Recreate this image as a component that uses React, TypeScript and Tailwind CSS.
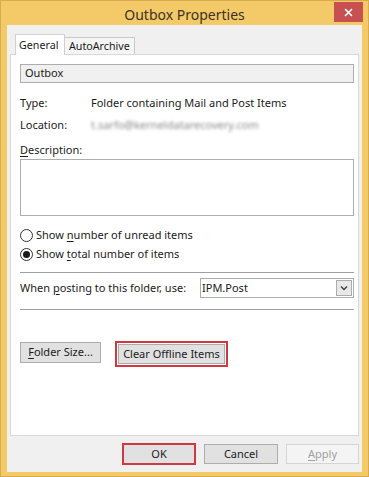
function U({ children }: { children: string }) {
  return <span className="underline underline-offset-2">{children}</span>;
}

function Radio({ checked }: { checked?: boolean }) {
  return (
    <div className="w-[13px] h-[13px] rounded-full border border-[#333] bg-white flex items-center justify-center">
      {checked && <div className="w-[7px] h-[7px] rounded-full bg-[#1a1a1a]" />}
    </div>
  );
}

export default function App() {
  return (
    <div
      className="w-[369px] h-[477px] bg-[#f4ca69] border border-[#d8ac4e] flex flex-col text-[11px] text-[#1b1b1b] whitespace-nowrap"
      style={{ fontFamily: '"Noto Sans", "Open Sans", sans-serif' }}
    >
      {/* Title bar */}
      <div className="relative h-[24px] shrink-0 flex items-center justify-center">
        <span className="text-[14px] text-[#3a3326] mt-[3px]">Outbox Properties</span>
        <div className="absolute right-[5px] top-[1px] w-[29px] h-[20px] bg-[#c75050] flex items-center justify-center">
          <svg width="9" height="9" viewBox="0 0 9 9">
            <path d="M1 1 L8 8 M8 1 L1 8" stroke="white" strokeWidth="1.6" />
          </svg>
        </div>
      </div>

      {/* Client */}
      <div className="flex-1 ml-[6px] mr-[6px] mb-[4px] bg-[#f0f0f0] flex flex-col">
        {/* Tabs */}
        <div className="flex items-end h-[29px] pl-[8px] pt-[8px] text-[10.7px]">
          <div className="h-[21px] w-[50px] bg-white border border-[#d0d0d0] border-b-0 pl-[3px] flex items-center relative top-[1px] z-10">
            General
          </div>
          <div className="h-[17px] w-[70px] bg-[#f5f5f5] border border-[#c8c8c8] border-l-0 border-b-0 pl-[4px] flex items-center text-[#1b1b1b]">
            AutoArchive
          </div>
        </div>

        {/* Panel */}
        <div className="ml-[3px] mr-[3px] h-[382px] bg-white border border-[#d9d9d9] pl-[9px] pr-[4px] flex flex-col">
          <div className="mt-[9px] h-[19px] bg-[#f0f0f0] border border-[#adadad] pl-[4px] flex items-center">
            Outbox
          </div>
          <div className="mt-[10px] h-[20px] flex items-center">
            <span className="w-[71px]">Type:</span>
            <span>Folder containing Mail and Post Items</span>
          </div>
          <div className="mt-[2px] h-[20px] flex items-center">
            <span className="w-[71px]">Location:</span>
            <span className="text-[#8a8a8a] blur-[1.4px]">t.sarfo@kerneldatarecovery.com</span>
          </div>
          <div className="mt-[7px] h-[16px] flex items-center">
            <span>
              <U>D</U>escription:
            </span>
          </div>
          <div className="mt-[1px] h-[57px] bg-white border border-[#abadb3]" />
          <div className="mt-[10px] h-[19px] flex items-center gap-[3px]">
            <Radio />
            <span>
              Show <U>n</U>umber of unread items
            </span>
          </div>
          <div className="h-[19px] flex items-center gap-[3px]">
            <Radio checked />
            <span>
              Show <U>t</U>otal number of items
            </span>
          </div>
          <div className="mt-[8px] h-px bg-[#a0a0a0]" />
          <div className="mt-[5px] h-[20px] flex items-center">
            <span className="w-[180px]">
              When <U>p</U>osting to this folder, use:
            </span>
            <div className="flex-1 h-[20px] bg-white border border-[#abadb3] pl-[1px] flex items-center justify-between pr-[1px]">
              <span>IPM.Post</span>
              <div className="w-[16px] h-[16px] bg-[#e8e8e8] border border-[#acacac] flex items-center justify-center">
                <svg width="8" height="6" viewBox="0 0 8 6">
                  <path d="M1 1.5 L4 4.5 L7 1.5" stroke="#404040" strokeWidth="1.5" fill="none" />
                </svg>
              </div>
            </div>
          </div>
          <div className="mt-[11px] h-px bg-[#a0a0a0]" />
          <div className="mt-[31px] flex items-start">
            <div className="mt-[1px] w-[81px] h-[21px] bg-[#e1e1e1] border border-[#adadad] flex items-center justify-center">
              <span>
                <U>F</U>older Size...
              </span>
            </div>
            <div className="ml-[14px] w-[113px] h-[26px] border-2 border-[#d0393f] p-[1px]">
              <div className="h-full bg-[#e1e1e1] border border-[#adadad] flex items-center justify-center">
                Clear Offline Items
              </div>
            </div>
          </div>
        </div>

        {/* Bottom buttons */}
        <div className="mt-[7px] flex items-start pl-[115px]">
          <div className="w-[74px] h-[22px] border-2 border-[#d0393f] bg-[#e1e1e1] flex items-center justify-center">
            OK
          </div>
          <div className="ml-[8px] mt-[1px] w-[74px] h-[20px] bg-[#e1e1e1] border border-[#adadad] flex items-center justify-center">
            Cancel
          </div>
          <div className="ml-[8px] mt-[1px] w-[73px] h-[20px] bg-[#f4f4f4] border border-[#d5d5d5] flex items-center justify-center text-[#a0a0a0]">
            <span>
              <U>A</U>pply
            </span>
          </div>
        </div>
      </div>
    </div>
  );
}
